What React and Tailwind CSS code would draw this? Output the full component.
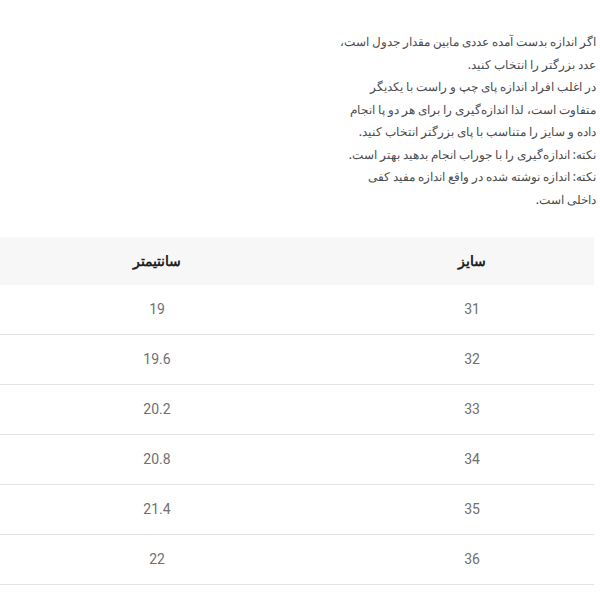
const lines = [
  "اگر اندازه بدست آمده عددی مابین مقدار جدول است،",
  "عدد بزرگتر را انتخاب کنید.",
  "در اغلب افراد اندازه پای چپ و راست با یکدیگر",
  "متفاوت است، لذا اندازه‌گیری را برای هر دو پا انجام",
  "داده و سایز را متناسب با پای بزرگتر انتخاب کنید.",
  "نکته: اندازه‌گیری را با جوراب انجام بدهید بهتر است.",
  "نکته: اندازه نوشته شده در واقع اندازه مفید کفی",
  "داخلی است.",
];

const rows = [
  ["31", "19"],
  ["32", "19.6"],
  ["33", "20.2"],
  ["34", "20.8"],
  ["35", "21.4"],
  ["36", "22"],
];

export default function App() {
  return (
    <div dir="rtl" className="w-[600px] h-[600px] bg-white overflow-hidden" style={{ fontFamily: "Roboto, 'Noto Sans', sans-serif" }}>
      <div className="pt-[31px] pr-[4px] text-[12px] font-medium leading-[22.5px] text-[#4d4d4d]">
        {lines.map((l) => (
          <div key={l} className="whitespace-nowrap">{l}</div>
        ))}
      </div>

      <div className="mt-[26px] w-[630px] mr-[6px] shrink-0">
        <div className="flex h-[48px] bg-[#f7f7f7] items-center text-[14px] font-bold text-[#222]">
          <div className="w-[244px] text-center">سایز</div>
          <div className="w-[386px] text-center">سانتیمتر</div>
        </div>
        {rows.map(([s, c]) => (
          <div key={s} className="flex h-[50px] items-center border-b border-[#e3e3e3] text-[14px] text-[#707070]">
            <div className="w-[244px] text-center">{s}</div>
            <div className="w-[386px] text-center">{c}</div>
          </div>
        ))}
      </div>
    </div>
  );
}
